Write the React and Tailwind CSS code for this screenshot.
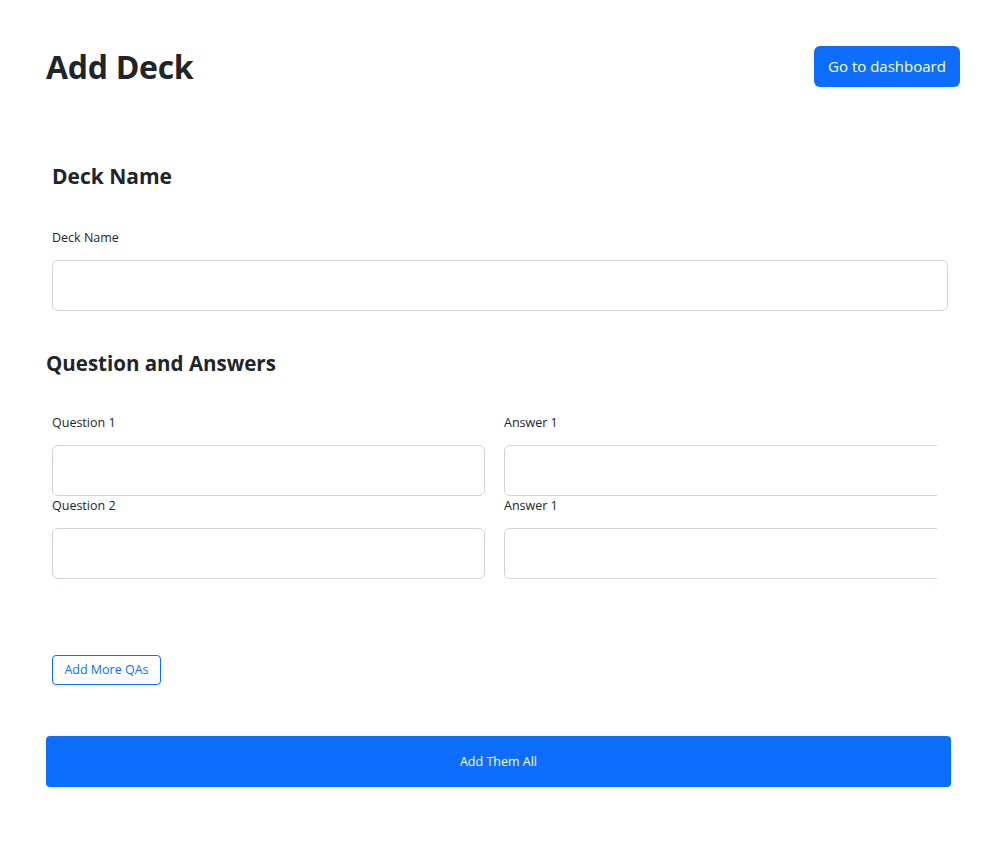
export default function App() {
  const rows = [
    { q: 'Question 1', a: 'Answer 1' },
    { q: 'Question 2', a: 'Answer 1' },
  ];

  return (
    <div className="min-h-screen bg-white px-[46px] pt-[46px] text-[#212529]" style={{ fontFamily: '"Open Sans", "Noto Sans", sans-serif' }}>
      <div className="flex h-[41px] items-center justify-between">
        <h1 className="text-[32px] font-bold leading-[44px] tracking-[-0.3px]">Add Deck</h1>
        <button className="mr-[1px] h-[41px] w-[146px] rounded-[6px] bg-[#0d6efd] text-[15px] text-white">Go to dashboard</button>
      </div>

      <div className="pl-[6px]">
        <h3 className="mt-[75px] text-[21px] font-bold leading-[29px]">Deck Name</h3>
        <label className="mt-[37px] block text-[12.5px] leading-[20px]">Deck Name</label>
        <input className="mt-[12px] block h-[51px] w-[896px] rounded-[6px] border border-[#ced4da] px-3 outline-none" />
      </div>

      <h3 className="mt-[38px] text-[20.5px] font-bold leading-[29px]">Question and Answers</h3>

      <div className="mt-[35px] ml-[6px] w-[885px] overflow-hidden">
        {rows.map((r, i) => (
          <div key={i} className="grid grid-cols-[433px_445px] gap-x-[19px]">
            <div>
              <label className="block text-[12.5px] leading-[20px]">{r.q}</label>
              <input className="mt-[12px] block h-[51px] w-full rounded-[6px] border border-[#ced4da] px-3 outline-none" />
            </div>
            <div>
              <label className="block text-[12.5px] leading-[20px]">{r.a}</label>
              <input className="mt-[12px] block h-[51px] w-full rounded-[6px] border border-[#ced4da] px-3 outline-none" />
            </div>
          </div>
        ))}
      </div>

      <button className="mt-[76px] ml-[6px] block h-[30px] w-[109px] rounded-[4px] border border-[#0d6efd] text-[12.5px] text-[#0d6efd]">Add More QAs</button>

      <button className="mt-[51px] block h-[51px] w-[905px] rounded-[4px] bg-[#0d6efd] pt-[2px] text-[12.5px] text-white">Add Them All</button>
    </div>
  );
}
